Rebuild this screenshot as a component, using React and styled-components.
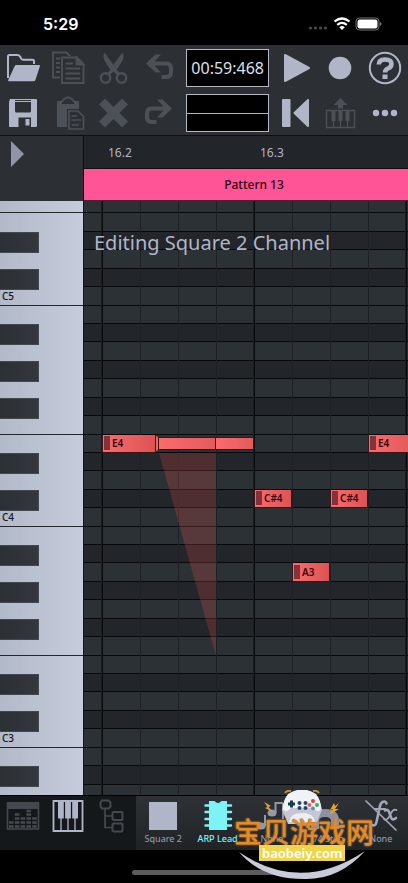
import React, { useState } from 'react'
import styled, { createGlobalStyle, css } from 'styled-components'

const STEP = 38
const NAMES = ['C', 'C#', 'D', 'D#', 'E', 'F', 'F#', 'G', 'G#', 'A', 'A#', 'B']
const TOP_PITCH = 77 // F5
const ROW_COUNT = 33

const rows = Array.from({ length: ROW_COUNT }, (_, i) => {
    const pitch = TOP_PITCH - i
    const name = NAMES[pitch % 12]
    return { id: pitch, name, octave: Math.floor(pitch / 12) - 1, sharp: name.length > 1 }
})

const rowOf = (label) => rows.findIndex((r) => r.name + r.octave === label) + 1

const notes = [
    { id: 1, pitch: 'E4', col: 2, length: 54 },
    { id: 2, pitch: 'C#4', col: 6, length: STEP },
    { id: 3, pitch: 'A3', col: 7, length: STEP },
    { id: 4, pitch: 'C#4', col: 8, length: STEP },
    { id: 5, pitch: 'E4', col: 9, length: 57 },
]

export default function App() {
    const [view, setView] = useState('Piano roll')
    const [slot, setSlot] = useState('ARP Lead')

    return (
        <Screen>
            <GlobalStyle />
            <StatusBar>
                <Clock>5:29</Clock>
                <StatusIcons />
            </StatusBar>

            <Toolbar>
                <ToolButton aria-label="Open"><OpenIcon /></ToolButton>
                <ToolButton aria-label="Copy" disabled><CopyIcon /></ToolButton>
                <ToolButton aria-label="Cut" disabled><CutIcon /></ToolButton>
                <ToolButton aria-label="Undo" disabled><UndoIcon /></ToolButton>
                <Display>00:59:468</Display>
                <ToolButton aria-label="Play"><PlayIcon /></ToolButton>
                <ToolButton aria-label="Record"><RecordIcon /></ToolButton>
                <ToolButton aria-label="Help"><HelpIcon /></ToolButton>

                <ToolButton aria-label="Save"><SaveIcon /></ToolButton>
                <ToolButton aria-label="Paste" disabled><PasteIcon /></ToolButton>
                <ToolButton aria-label="Delete" disabled><DeleteIcon /></ToolButton>
                <ToolButton aria-label="Redo" disabled><RedoIcon /></ToolButton>
                <Meter><span /><span /></Meter>
                <ToolButton aria-label="Back to start"><RewindIcon /></ToolButton>
                <ToolButton aria-label="Keyboard" disabled><KeyboardIcon /></ToolButton>
                <ToolButton aria-label="More"><MoreIcon /></ToolButton>
            </Toolbar>

            <Timeline>
                <Corner aria-label="Expand tracks">
                    <svg width="13" height="26" viewBox="0 0 13 26"><path d="M0 0L13 13L0 26Z" fill="#9196a6" /></svg>
                </Corner>
                <Tracks>
                    <Ruler>
                        <Beat>16.2</Beat>
                        <Beat>16.3</Beat>
                    </Ruler>
                    <Pattern>Pattern 13</Pattern>
                </Tracks>
            </Timeline>

            <Roll>
                <Keys>
                    {rows.map((r) => (
                        <Key key={r.id} $line={r.name === 'C' || r.name === 'F'}>
                            {r.sharp && <BlackKey />}
                            {r.name === 'C' && r.name + r.octave}
                        </Key>
                    ))}
                </Keys>
                <Viewport>
                    <Heading>Editing Square 2 Channel</Heading>
                    <Canvas>
                        {rows.map((r, i) => <Lane key={r.id} $row={i + 1} $sharp={r.sharp} />)}
                        <BeatLines />
                        <Slide viewBox="0 0 57 203" preserveAspectRatio="none">
                            <path d="M0 0H57V203Z" />
                        </Slide>
                        {notes.map((n) => (
                            <Note key={n.id} $row={rowOf(n.pitch)} $col={n.col} $length={n.length}>
                                <Velocity />
                                {n.pitch}
                            </Note>
                        ))}
                        <Sustain><i /><b /><b /></Sustain>
                    </Canvas>
                </Viewport>
            </Roll>

            <BottomBar>
                <Views>
                    {[['Mixer', MixerIcon], ['Piano roll', PianoIcon], ['Routing', RoutingIcon]].map(([name, Icon]) => (
                        <ViewButton key={name} aria-label={name} $active={view === name} onClick={() => setView(name)}>
                            <Icon />
                        </ViewButton>
                    ))}
                </Views>
                <Slots>
                    {slots.map(({ id, label, Icon }) => (
                        <Slot key={id} $active={slot === label} onClick={() => setSlot(label)}>
                            <Icon />
                            {label}
                        </Slot>
                    ))}
                </Slots>
            </BottomBar>

            <HomeArea><HomeBar /></HomeArea>
            <Watermark />
        </Screen>
    )
}


// icons
const Icon = ({ children, ...rest }) => (
    <svg width="34" height="34" viewBox="0 0 34 34" fill="none" stroke="currentColor" strokeWidth="2" {...rest}>
        {children}
    </svg>
)

const OpenIcon = () => (
    <Icon>
        <path d="M2 27V5.500Q2 4 3.500 4H11.500Q13 4 14 5.500L15.500 8Q16 8.700 17 8.700H26.500Q28 8.700 28 10V13" />
        <path d="M10.500 14H33Q34.300 14 33.900 15.200L29.500 28.800Q29 30.300 27.500 30.300H3Q1.700 30.300 2.200 29L8.500 15.400Q9.200 14 10.500 14Z" fill="currentColor" stroke="none" />
    </Icon>
)

const CopyIcon = () => (
    <Icon strokeWidth="1.900">
        <path d="M9 26.500H2V1.500H15.500L19 5" />
        <path d="M5 7.500H9M5 12H9M5 16.500H9M5 21H9" />
        <path d="M11 6.500H26L32.500 13V32H11Z" />
        <path d="M25.500 6.500V13.500H32.500Z" fill="currentColor" />
        <path d="M14.500 12.500H22M14.500 17.500H29M14.500 22.500H29M14.500 27.500H29" />
    </Icon>
)

const CutIcon = () => (
    <Icon>
        <circle cx="9.500" cy="27" r="4.700" strokeWidth="2.400" />
        <circle cx="25.500" cy="27" r="4.700" strokeWidth="2.400" />
        <path d="M8.500 1.500Q6.500 5 8.500 9.500L14.300 19L11 22.500L13.500 24.500L17.500 20.500L21.500 24.500L24 22.500L20.500 18Z" fill="currentColor" stroke="none" />
        <path d="M26.500 1.500Q28.500 5 26.500 9.500L20.800 18.500L16.800 14.500Z" fill="currentColor" stroke="none" />
    </Icon>
)

const arrow = 'M4 12.500L13.500 3.500H19L12.500 10.500H24.500Q31 10.500 31 17V21.500Q31 28 24.500 28H19.500V24H24Q27 24 27 21V17.500Q27 14.500 24 14.500H12.500L19 21.500H13.500Z'

const UndoIcon = () => (
    <Icon stroke="none" fill="currentColor"><path d={arrow} /></Icon>
)

const RedoIcon = () => (
    <Icon stroke="none" fill="currentColor"><path d={arrow} transform="translate(34 0) scale(-1 1)" /></Icon>
)

const SaveIcon = () => (
    <Icon stroke="none" fill="currentColor">
        <path fillRule="evenodd" d="M4 3H30Q31 3 31 4V30Q31 31 30 31H4Q3 31 3 30V6ZM9 6V15Q9 16.500 10.500 16.500H23.500Q25 16.500 25 15V6ZM12.500 21.500V31H25V21.500ZM9 4V5H25V4Z" />
        <path d="M19.500 23H23.500V29.500H19.500Z" />
    </Icon>
)

const PasteIcon = () => (
    <Icon stroke="none" fill="currentColor">
        <path fillRule="evenodd" d="M7 5H10L13 2Q17 -1 21 2L24 5H27Q28 5 28 6V13H16V31H7Q6 31 6 30V6Q6 5 7 5ZM11 8H23V6.500L20 3.500Q17 1.500 14 3.500L11 6.500Z" />
        <path d="M18 15H27L32.500 20.500V33H18Z" fill="#2c3035" stroke="currentColor" strokeWidth="1.700" />
        <path d="M20.500 20H26M20.500 24H30M20.500 29H28" stroke="currentColor" strokeWidth="1.700" />
    </Icon>
)

const DeleteIcon = () => (
    <Icon strokeWidth="8.500"><path d="M6 5.500L29 28.500M29 5.500L6 28.500" /></Icon>
)

const PlayIcon = () => (
    <Icon fill="currentColor" strokeLinejoin="round"><path d="M7 4V30L31 17Z" /></Icon>
)

const RecordIcon = () => (
    <Icon fill="currentColor" stroke="none"><circle cx="17" cy="17" r="11.300" /></Icon>
)

const HelpIcon = () => (
    <Icon>
        <circle cx="17" cy="17" r="15.200" />
        <path d="M10.800 13.500Q11 8.500 17 8.500Q23.500 8.500 23.500 13Q23.500 16 20 17.500Q17 18.800 17 21.500" strokeWidth="4.600" />
        <path d="M14.500 23.500H19.500V28H14.500Z" fill="currentColor" stroke="none" />
    </Icon>
)

const RewindIcon = () => (
    <Icon fill="currentColor" strokeLinejoin="round">
        <path d="M5 4H11.500V30H5Z" />
        <path d="M30 4V30L16.500 17Z" />
    </Icon>
)

const KeyboardIcon = () => (
    <Icon strokeWidth="1.400">
        <path d="M3.500 14.500H31.500V31.500H3.500Z" />
        <path d="M10.500 24V31M17.500 24V31M24.500 24V31" />
        <path d="M8.500 15H12.500V25H8.500ZM15.500 15H19.500V25H15.500ZM22.500 15H26.500V25H22.500Z" fill="currentColor" stroke="none" />
        <path d="M17.500 2L24.500 9H20V12.500H15V9H10.500Z" fill="currentColor" stroke="none" />
    </Icon>
)

const MoreIcon = () => (
    <Icon fill="currentColor" stroke="none">
        <circle cx="8" cy="17" r="3.200" /><circle cx="17" cy="17" r="3.200" /><circle cx="26" cy="17" r="3.200" />
    </Icon>
)

const MixerIcon = () => (
    <Icon strokeWidth="1.600">
        <path d="M1.500 4H32.500V30H1.500Z" />
        <path d="M1 3H33V10H1Z" fill="currentColor" stroke="none" />
        <path d="M3 27.500H31M3 23.500H31M8.800 19.500H31M8.800 15.500H13.400M20.400 15.500H25M20.400 12H25" strokeWidth="2.500" strokeDasharray="4.600 1.200" />
    </Icon>
)

const PianoIcon = () => (
    <Icon strokeWidth="1.800">
        <path d="M2.500 2H31.500V32H2.500Z" />
        <path d="M10 19V32M17 19V32M24 19V32" strokeWidth="1.300" />
        <path d="M7 2H12.800V19.500H7ZM14.100 2H19.900V19.500H14.100ZM21.200 2H27V19.500H21.200Z" fill="currentColor" stroke="none" />
    </Icon>
)

const RoutingIcon = () => (
    <Icon strokeWidth="2">
        <path d="M6 1.500H12.500L14.500 3.500V7.500L12.500 9.500H6L4.500 7.500V3.500Z" />
        <path d="M9 9.500V28.500H16M9 17H16" strokeWidth="1.700" />
        <path d="M17.500 13H25.500L26.500 14V20L25.500 21H17.500L16.500 20V14ZM17.500 24.500H25.500L26.500 25.500V31.500L25.500 32.500H17.500L16.500 31.500V25.500Z" />
    </Icon>
)

const SquareIcon = () => (
    <Icon fill="#b0b6c7" stroke="none"><path d="M3 3H31V31H3Z" /></Icon>
)

const ChipIcon = () => (
    <Icon>
        <path d="M8 2H13.500Q17 6 20.500 2H26V31H8Z" fill="currentColor" stroke="none" />
        <path d="M4.500 6.500H30M4.500 13H30M4.500 20H30M4.500 26.500H30" strokeWidth="2.400" strokeLinecap="round" />
    </Icon>
)

const ArpIcon = () => (
    <Icon fill="#9398a6" stroke="#9398a6">
        <ellipse cx="6" cy="27" rx="4.500" ry="3.500" stroke="none" />
        <ellipse cx="17" cy="14" rx="4.500" ry="3.500" stroke="none" />
        <path d="M10 27V16M20.500 14V3M28 20V4M20 4H28" fill="none" />
        <path d="M9 3L16 7L13.500 8L18 13L10 9L12.500 8Z" fill="#e9a32a" stroke="none" />
    </Icon>
)

const MagnetIcon = () => (
    <Icon>
        <path d="M6 30V22Q6 14 16 14Q26 14 26 22V30" stroke="#8d92a0" strokeWidth="8" />
        <path d="M25 4L21 11L24 10L20 16L30 10L26 10L30 4L26 7Z" fill="#e9a32a" stroke="none" />
    </Icon>
)

const FxIcon = () => (
    <Icon stroke="#a3a8b7" strokeLinecap="round">
        <path d="M22.500 4.500Q21.500 1.500 18.500 3Q16.500 4 15.500 9L12.500 23Q11.500 27.500 8 26" strokeWidth="2.600" />
        <path d="M11 10H21" strokeWidth="2" />
        <path d="M21 11.500Q24 9.500 25.500 14L27 18.500Q28.500 22 32 19" strokeWidth="2.600" />
        <path d="M32.500 11Q29.500 9.500 27 14L25 18Q22.500 22 20 20" strokeWidth="1.700" />
        <path d="M2 2L32 31" strokeWidth="1.700" />
    </Icon>
)

const slots = [
    { id: 'square', label: 'Square 2', Icon: SquareIcon },
    { id: 'instrument', label: 'ARP Lead', Icon: ChipIcon },
    { id: 'arp', label: 'None', Icon: ArpIcon },
    { id: 'snap', label: '1/4 Step', Icon: MagnetIcon },
    { id: 'fx', label: 'None', Icon: FxIcon },
]

const StatusIcons = () => (
    <svg width="74" height="14" viewBox="0 0 74 14" fill="#fff">
        <g fill="#4a4a4a">
            <circle cx="2.500" cy="11" r="1.600" /><circle cx="7.500" cy="11" r="1.600" />
            <circle cx="12.500" cy="11" r="1.600" /><circle cx="17.500" cy="11" r="1.600" />
        </g>
        <path d="M26.500 4.500Q34 -1.500 41.500 4.500" fill="none" stroke="#fff" strokeWidth="2.200" />
        <path d="M29.200 7.800Q34 4 38.800 7.800" fill="none" stroke="#fff" strokeWidth="2.200" />
        <path d="M34 13L31.200 10.200Q34 8 36.800 10.200Z" />
        <rect x="48" y="1" width="23" height="12" rx="3.500" fill="none" stroke="#777" />
        <rect x="49.500" y="2.500" width="20" height="9" rx="2.200" />
        <path d="M72 5V9Q73.500 8.500 73.500 7Q73.500 5.500 72 5Z" fill="#777" />
    </svg>
)

const Watermark = () => (
    <Brand>
        <svg width="140" height="93" viewBox="0 0 140 93">
            <path d="M5 62Q67 104 131 61Q105 90 70 89Q28 89 5 62Z" fill="#c9cbd9" />
            <path d="M48 20Q51 0 68 0Q85 0 88 20L82 34H54Z" fill="#c5c8d4" />
            <path d="M54 4Q68 -5 82 4Q87 10 87 19Q84 24 79 18H57Q52 24 49 19Q49 10 54 4Z" fill="#f1f2f6" />
            <path d="M51 3Q53 0 57 1M79 1Q83 0 85 3" stroke="#c78b3c" strokeWidth="2" fill="none" />
            <path d="M54 14H61M57.500 10.500V17.500" stroke="#163b4d" strokeWidth="3" />
            <g fill="#25476a">
                <circle cx="65.500" cy="13" r="2" /><circle cx="71.500" cy="13" r="2" />
                <circle cx="65.500" cy="18" r="2" /><circle cx="71.500" cy="18" r="2" />
            </g>
            <circle cx="79" cy="11" r="2" fill="#d8433f" /><circle cx="83" cy="15" r="2" fill="#49a96c" />
            <circle cx="75.500" cy="15" r="2" fill="#e25d52" /><circle cx="79" cy="18.500" r="2" fill="#4f97c9" />
            <path d="M55 32Q56 23 68 23Q80 23 81 32Z" fill="#eceef3" />
        </svg>
        <BrandName>宝贝游戏网</BrandName>
        <BrandUrl>baobeiy.com</BrandUrl>
    </Brand>
)


// styled components
const GlobalStyle = createGlobalStyle`
    * { box-sizing: border-box; }
    body {
        margin: 0;
        background: #000;
        font-family: 'Noto Sans', 'Noto Sans CJK SC', sans-serif;
    }
    button {
        padding: 0;
        border: 0;
        background: none;
        font: inherit;
        cursor: pointer;
    }
    svg { display: block; flex: none; }
`

const Screen = styled.main`
    position: relative;
    display: flex;
    flex-direction: column;
    height: 100vh;
    overflow: hidden;
    color: #b0b6c7;
`

const StatusBar = styled.header`
    display: flex;
    align-items: center;
    justify-content: space-between;
    height: 45px;
    padding: 2px 26px 0 43px;
    background: #000;
`

const Clock = styled.time`
    font: 600 16px/20px Inter, sans-serif;
    color: #fff;
`

const Toolbar = styled.nav`
    display: grid;
    grid-template-columns: repeat(4, 1fr) 2fr repeat(3, 1fr);
    grid-auto-rows: 45px;
    background: #2c3035;
    border-bottom: 1px solid #0d0f11;
`

const ToolButton = styled.button`
    display: flex;
    align-items: center;
    justify-content: center;
    color: #b0b6c7;

    &:disabled {
        color: #4c5057;
        cursor: default;
    }
`

const screenBox = css`
    margin: 4px 3px 3px 5px;
    border: 1px solid #b4b8c2;
    background: #000;
`

const Display = styled.output`
    ${screenBox}
    display: flex;
    align-items: center;
    justify-content: center;
    font-size: 16px;
    color: #dde0e8;
`

const Meter = styled.div`
    ${screenBox}
    display: grid;
    grid-template-rows: 1fr 1fr;

    span + span { border-top: 1px solid #b4b8c2; }
`

const Timeline = styled.section`
    display: flex;
    height: 65px;
    background: #2c3035;
`

const Corner = styled.button`
    display: flex;
    align-items: flex-start;
    width: 84px;
    padding: 5px 11px;
    border-right: 1px solid #0d0f11;
`

const Tracks = styled.div`
    flex: 1;
    display: flex;
    flex-direction: column;
`

const Ruler = styled.div`
    display: flex;
    align-items: center;
    height: 33px;
    padding-left: 18px;
    overflow: hidden;
    background: #22252a;
    border-bottom: 1px solid #0d0f11;
`

const Beat = styled.span`
    flex: none;
    width: 152px;
    padding-left: 6px;
    font-size: 12px;
`

const Pattern = styled.div`
    flex: 1;
    display: flex;
    align-items: center;
    justify-content: center;
    padding-left: 16px;
    background: #ff5597;
    border-bottom: 1px solid #5b1a36;
    font-size: 12px;
    font-weight: 500;
    color: #26060f;
`

const Roll = styled.section`
    flex: 1;
    display: flex;
    min-height: 0;
    overflow: hidden;
    border-bottom: 1px solid #000;
`

const lanes = css`
    display: grid;
    grid-template-rows: repeat(${ROW_COUNT}, 1fr);
    height: 608px;
    margin-top: -6px;
`

const Keys = styled.div`
    ${lanes}
    flex: none;
    width: 84px;
    background: linear-gradient(to right, #b2b9c8, #c6ccdb);
    border-right: 1px solid #15171a;
`

const Key = styled.div`
    display: flex;
    align-items: center;
    min-height: 0;
    padding-left: ${(pr) => (pr.$line ? '2px' : 0)};
    border-bottom: ${(pr) => (pr.$line ? '1px solid #24272c' : 0)};
    font-size: 10px;
    line-height: 12px;
    font-weight: 500;
    color: #15171a;
`

const BlackKey = styled.span`
    align-self: flex-start;
    width: 39px;
    height: 21px;
    background: linear-gradient(to right, #2b3035, #34373d);
    border: 1px solid #43474f;
    border-left: 0;
`

const Viewport = styled.div`
    position: relative;
    flex: 1;
    min-width: 0;
    overflow: hidden;
`

const Heading = styled.h1`
    position: absolute;
    z-index: 1;
    top: 28px;
    left: 10px;
    margin: 0;
    font-size: 20px;
    line-height: 28px;
    font-weight: 400;
    white-space: nowrap;
`

/* starts one step left of the first visible beat line */
const Canvas = styled.div`
    ${lanes}
    grid-template-columns: repeat(auto-fill, ${STEP}px);
    width: calc(100% + ${STEP + 20}px);
    margin-left: -20px;
`

const Lane = styled.div`
    grid-column: 1 / -1;
    grid-row: ${(pr) => pr.$row};
    background: ${(pr) => (pr.$sharp ? '#22252a' : '#2c3135')};
    border-bottom: 1px solid #06080a;
`

const BeatLines = styled.div`
    grid-column: 1 / -1;
    grid-row: 1 / -1;
    background:
        linear-gradient(to right, #1b1e21 1px, #07090b 1px, #07090b 2px, transparent 2px) 37px 0 / ${STEP * 4}px 100%,
        linear-gradient(to right, #1d2024 1px, transparent 1px) 0 0 / ${STEP}px 100%;
`

const Note = styled.button`
    grid-row: ${(pr) => pr.$row};
    grid-column: ${(pr) => pr.$col};
    display: flex;
    align-items: center;
    gap: 2px;
    width: ${(pr) => pr.$length}px;
    padding: 0 1px;
    border: solid #3c1518;
    border-width: 0 1px 1px;
    background: linear-gradient(to right, #fb6b6c, #dc5354);
    font-size: 10px;
    line-height: 12px;
    font-weight: 600;
    color: #30090c;
`

const Velocity = styled.span`
    flex: none;
    width: 6px;
    height: 14px;
    background: #86303a;
`

const Sustain = styled.div`
    grid-row: ${rowOf('E4')};
    grid-column: 3 / 6;
    display: flex;
    align-items: center;
    margin-left: 15px;

    i {
        width: 4px;
        height: 17px;
        border: 1px solid #3c1518;
        border-radius: 0 3px 3px 0;
        background: #f06465;
    }

    b {
        flex: 57 0 0;
        height: 13px;
        border: solid #3c1518;
        border-width: 1px 1px 1px 0;
        background: linear-gradient(to right, #fb6b6c, #e45a5b);
    }

    b + b { flex-grow: 38; }
`

const Slide = styled.svg`
    grid-row: ${rowOf('E4') + 1} / span 11;
    grid-column: 3 / 5;
    width: 57px;
    height: 100%;
    min-height: 0;
    margin-left: 19px;
    fill: rgba(240, 80, 80, 0.22);
`

const BottomBar = styled.footer`
    display: grid;
    grid-template-columns: 1fr 2fr;
    height: 54px;
    background: linear-gradient(#2e3236, #202326);
`

const Views = styled.div`
    display: grid;
    grid-template-columns: repeat(3, 1fr);
    background: #15181b;
`

const ViewButton = styled.button`
    display: flex;
    justify-content: center;
    padding-top: 3px;
    color: ${(pr) => (pr.$active ? '#b0b6c7' : '#45494f')};
`

const Slots = styled.div`
    display: grid;
    grid-template-columns: repeat(5, 1fr);
`

const Slot = styled.button`
    display: flex;
    flex-direction: column;
    align-items: center;
    padding-top: 3px;
    font-size: 9px;
    line-height: 12px;
    font-weight: ${(pr) => (pr.$active ? 500 : 400)};
    color: ${(pr) => (pr.$active ? '#7df3f5' : '#9da2b0')};
`

const HomeArea = styled.div`
    display: flex;
    justify-content: center;
    height: 33px;
    padding-top: 20px;
    background: #000;
`

const HomeBar = styled.span`
    width: 144px;
    height: 5px;
    border-radius: 3px;
    background: #5c5c5c;
`

const Brand = styled.div`
    position: absolute;
    right: 34px;
    bottom: 0;
    width: 140px;
    pointer-events: none;
`

const BrandName = styled.strong`
    position: absolute;
    top: 27px;
    left: 0;
    font: 500 28px/28px 'Noto Sans CJK SC', sans-serif;
    white-space: nowrap;
    color: #e88a24;
    text-shadow: 0 0 1px #7a4312, 0 0 2px #c9b79c;
`

const BrandUrl = styled.span`
    position: absolute;
    top: 55px;
    left: 25px;
    padding: 0 3px;
    background: #efd548;
    font-size: 13px;
    line-height: 16px;
    font-weight: 600;
    color: #fff;
`
